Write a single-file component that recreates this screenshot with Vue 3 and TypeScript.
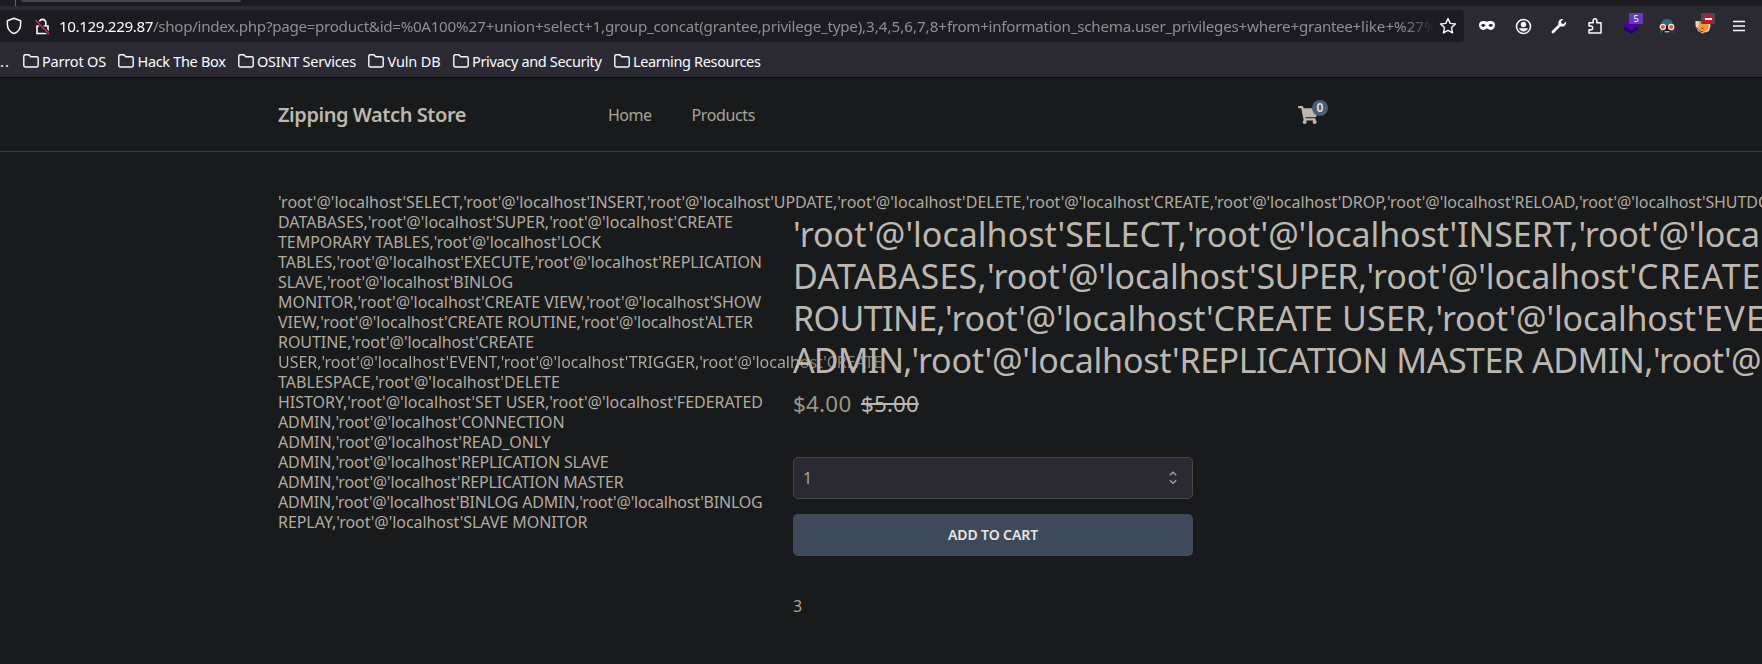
<script setup lang="ts">
import type { Directive } from 'vue'

interface Run {
  text: string
  width: number
}

// Tracks a run of text so that its advance equals the given width.
const vFit: Directive<HTMLElement, number> = {
  mounted(el, { value }) {
    const length = el.textContent?.length ?? 0
    if (!length) return
    el.style.letterSpacing = `${(value - el.getBoundingClientRect().width) / length}px`
  },
}

const run = (text: string, width: number): Run => ({ text, width })
const grant = (privilege: string): string => `'root'@'localhost'${privilege}`

const urlPath: Run[] = [
  run('/shop/index.php?page=product&id=%0A10', 294.5),
  run('0%27+union+select+1,', 157.5),
  run('group_concat(grantee,privilege_type)', 257),
  run(',3,4,5,6,7,8+', 85),
  run('from+', 41.5),
  run('information_schema.user_privileges+', 258.5),
  run('where+', 52),
  run('grantee+', 62),
  run('like+%27', 63),
  run('%', 13),
]

const bookmarks: Run[] = [
  run('Parrot OS', 64),
  run('Hack The Box', 88),
  run('OSINT Services', 99),
  run('Vuln DB', 53),
  run('Privacy and Security', 129.5),
  run('Learning Resources', 127.5),
]

const imageText: Run[][] = [
  [
    run(`${grant('SELECT')},`, 185.3),
    run(`${grant('INSERT')},`, 183.7),
    run(`${grant('UPDATE')},`, 190.2),
    run(`${grant('DELETE')},`, 188.6),
    run(`${grant('CREATE')},`, 188.2),
    run(`${grant('DROP')},`, 173),
    run(`${grant('RELOAD')},`, 192),
    run(grant('SHUTDOWN'), 218),
  ],
  [run(`DATABASES,${grant('SUPER')},${grant('CREATE')}`, 455)],
  [run(`TEMPORARY TABLES,${grant('LOCK')}`, 323)],
  [run(`TABLES,${grant('EXECUTE')},${grant('REPLICATION')}`, 484)],
  [run(`SLAVE,${grant('BINLOG')}`, 235)],
  [run(`MONITOR,${grant('CREATE VIEW')},${grant('SHOW')}`, 483)],
  [run(`VIEW,${grant('CREATE ROUTINE')},${grant('ALTER')}`, 475)],
  [run(`ROUTINE,${grant('CREATE')}`, 256)],
  [run(`USER,${grant('EVENT')},${grant('TRIGGER')},${grant('CREATE')}`, 604.5)],
  [run(`TABLESPACE,${grant('DELETE')}`, 282)],
  [run(`HISTORY,${grant('SET USER')},${grant('FEDERATED')}`, 485)],
  [run(`ADMIN,${grant('CONNECTION')}`, 286.5)],
  [run(`ADMIN,${grant('READ_ONLY')}`, 272.5)],
  [run(`ADMIN,${grant('REPLICATION SLAVE')}`, 330.5)],
  [run(`ADMIN,${grant('REPLICATION MASTER')}`, 345.5)],
  [run(`ADMIN,${grant('BINLOG ADMIN')},${grant('BINLOG')}`, 484.5)],
  [run(`REPLAY,${grant('SLAVE MONITOR')}`, 309.5)],
]

const titleText: Run[][] = [
  [run(`${grant('SELECT')},`, 394), run(`${grant('INSERT')},`, 391.5), run(grant('UPDATE'), 392)],
  [run('DATABASES,', 194), run(grant(''), 269.5), run('SUPER,', 110), run(grant(''), 270.5), run('CREATE', 124.5)],
  [run('ROUTINE,', 152), run(grant(''), 268.5), run('CREATE USER,', 222), run(grant(''), 268.5), run('EVENT,', 118)],
  [run('ADMIN,', 118.5), run(grant(''), 268), run('REPLICATION MASTER ADMIN,', 473.5), run(grant('BINLOG'), 385)],
]
</script>

<template>
  <div class="window">
    <div class="tabs"><i class="divider"></i><i class="tab"></i></div>
    <div class="toolbar">
      <div class="urlbar">
        <svg class="shield" width="16" height="18" viewBox="0 0 16 18"><path d="M8 1.2 14.6 3.7V7.500C14.6 12 12 14.9 8 16.6 4 14.9 1.4 12 1.4 7.500V3.7Z" fill="none" stroke="#fbfbfe" stroke-width="1.5" stroke-linejoin="round" /></svg>
        <svg class="lock" width="15" height="17" viewBox="0 0 15 17">
          <path d="M2 8h11v7.500H2zM4.200 8V4.700a3.300 3.300 0 0 1 6.600 0V8" fill="none" stroke="#fbfbfe" stroke-width="1.6" />
          <path d="M.8 2.200 14 15.800" stroke="#1c1b22" stroke-width="3.500" />
          <path d="M.5 2.200 14 15.800" stroke="#e22850" stroke-width="1.400" />
        </svg>
        <div class="url"><span v-fit="94" class="host">10.129.229.87</span><span v-for="part in urlPath" :key="part.text" v-fit="part.width">{{ part.text }}</span></div>
        <svg class="star" width="18" height="18" viewBox="0 0 18 18"><path d="m9 1.500 2.200 4.900 5.300.6-4 3.600 1.100 5.300L9 13.300l-4.600 2.600 1.100-5.300-4-3.600 5.300-.6Z" fill="none" stroke="#fbfbfe" stroke-width="1.400" stroke-linejoin="round" /></svg>
      </div>
      <div class="actions">
        <svg viewBox="0 0 20 20"><path fill="#fbfbfe" fill-rule="evenodd" d="M2 8.600C2 6 4.300 5 6.500 5 8 5 9 5.700 10 5.700S12 5 13.500 5C15.700 5 18 6 18 8.600c0 3.200-1.800 5.400-4.200 5.400-1.800 0-2.600-1.600-3.800-1.600S8 14 6.200 14C3.800 14 2 11.800 2 8.600ZM4 9.400c1.300 1.800 3.400 1.600 4.500.1C7.300 7.600 5 7.700 4 9.400Zm12 0c-1.300 1.800-3.400 1.600-4.500.1 1.200-1.900 3.500-1.800 4.500-.1Z" /></svg>
        <svg viewBox="0 0 20 20"><circle cx="10.500" cy="10.500" r="7" fill="none" stroke="#fbfbfe" stroke-width="1.500" /><circle cx="10.500" cy="8.500" r="2.700" fill="#fbfbfe" /><path d="M6.100 12.200h8.800c-.5 2-2.400 3.200-4.400 3.200s-3.900-1.200-4.400-3.200Z" fill="#fbfbfe" /></svg>
        <svg viewBox="0 0 20 20"><path d="m3.900 16 7.300-7.300" stroke="#fbfbfe" stroke-width="2.700" stroke-linecap="round" /><path d="M14.500 3 12 5.600l.5 2 2 .5L17 5.600c.6 3-1.300 5.200-4.200 5L9.500 9.900 9.300 7C9.300 4.200 11.700 2.500 14.500 3Z" fill="#fbfbfe" /></svg>
        <svg viewBox="0 0 20 20"><path d="M4 17V13.800h1.800a1.900 1.900 0 0 0 0-3.800H4V6.700h4.200V4.500a1.800 1.800 0 0 1 3.600 0v2.200H16V17Z" fill="none" stroke="#fbfbfe" stroke-width="1.500" stroke-linejoin="round" /></svg>
        <div class="extension">
          <svg viewBox="0 0 20 20"><path d="m2 12.500 8-5 8 5-8 5.500Z" fill="#20006b" /><path d="m2 9 8-5.500L18 9l-8 5.500Z" fill="#4b00a8" /></svg>
          <b class="count">5</b>
        </div>
        <svg viewBox="0 0 20 20">
          <path d="M4 9.500C4 5 6.500 3 10 3s6 2 6 6.500Z" fill="#2d6a7a" /><path d="M3 14h14v3H3z" fill="#194958" /><path d="M6 11h8v6H6z" fill="#17191e" /><path d="M7.500 15.800h5" stroke="#c9d4d8" stroke-width="1.200" />
          <circle cx="5.800" cy="11" r="2.600" fill="#e1543e" stroke="#f4e3dc" stroke-width="1.200" /><circle cx="14.200" cy="11" r="2.600" fill="#e1543e" stroke="#f4e3dc" stroke-width="1.200" />
        </svg>
        <div class="extension">
          <svg viewBox="0 0 20 20"><path d="m2.500 5 6 .5 8-.5 1 5-1.500 5-6 2.500-5-2.500-2.500-5Z" fill="#ded9d0" /><path d="M6 6h8l2 4-2 5-6 1-3-4Z" fill="#f79a35" /><path d="m3.500 11 3 4 6 1.500" fill="none" stroke="#5f5750" /><path d="m8 12 3 1" stroke="#9c5120" /></svg>
          <i class="blocked"><i></i></i>
        </div>
        <svg viewBox="0 0 20 20"><path d="M4 5.500h12M4 10h12M4 14.500h12" stroke="#fbfbfe" stroke-width="1.300" /></svg>
      </div>
    </div>
    <div class="bookmarks">
      <span class="more">..</span>
      <span v-for="item in bookmarks" :key="item.text" class="bookmark">
        <svg width="16" height="14" viewBox="0 0 16 14"><path d="M2.200.8h3.600l2 2h6c.8 0 1.400.6 1.400 1.400v7.400c0 .8-.6 1.400-1.400 1.400H2.200C1.400 13 .8 12.400.8 11.600V2.200C.8 1.400 1.400.8 2.200.8Z" fill="none" stroke="#fbfbfe" stroke-width="1.400" /></svg>
        <span v-fit="item.width" class="label">{{ item.text }}</span>
      </span>
    </div>

    <header>
      <h1><span v-fit="188">Zipping Watch Store</span></h1>
      <nav><a v-fit="43.500">Home</a><a v-fit="63.500">Products</a></nav>
      <div class="cart">
        <svg width="20" height="18" viewBox="0 0 576 512"><path fill="#bdb7af" d="M528.120 301.319l47.273-208C578.806 78.301 567.391 64 551.990 64H159.208l-9.166-44.810C147.758 8.021 137.930 0 126.529 0H24C10.745 0 0 10.745 0 24v16c0 13.255 10.745 24 24 24h69.883l70.248 343.435C147.325 417.100 136 435.222 136 456c0 30.928 25.072 56 56 56s56-25.072 56-56c0-15.674-6.447-29.835-16.824-40h209.647C430.447 426.165 424 440.326 424 456c0 30.928 25.072 56 56 56s56-25.072 56-56c0-22.172-12.888-41.332-31.579-50.405l5.517-24.276c3.413-15.018-8.002-29.319-23.403-29.319H218.117l-6.545-32h293.145c11.206 0 20.920-7.754 23.403-18.681z" /></svg>
        <span>0</span>
      </div>
    </header>

    <main>
      <div class="image">
        <div v-for="(line, i) in imageText" :key="i" class="line"><span v-for="(part, j) in line" :key="j" v-fit="part.width" :class="{ faded: i === 8 }">{{ part.text }}</span></div>
      </div>
      <section>
        <h2>
          <div v-for="(line, i) in titleText" :key="i" class="line"><span v-for="(part, j) in line" :key="j" v-fit="part.width">{{ part.text }}</span></div>
        </h2>
        <div class="price"><span v-fit="58.500">$4.00</span><s v-fit="58">$5.00</s></div>
        <div class="quantity"><span>1</span><svg width="8" height="14" viewBox="0 0 8 14"><path d="m.8 4.200 3.200-3 3.200 3M.8 9.200l3.200 3 3.200-3" fill="none" stroke="#a09daa" stroke-width="1.400" /></svg></div>
        <button><span v-fit="90">ADD TO CART</span></button>
        <p>3</p>
      </section>
    </main>
  </div>
</template>

<style>
body { margin: 0; background: #181a1b; overflow: hidden; }
</style>

<style scoped>
* { box-sizing: border-box; }
.window { width: 1762px; height: 664px; overflow: hidden; background: #181a1b; color: #b2aba1; font-family: "Noto Sans", sans-serif; white-space: nowrap; }
.tabs { height: 6px; background: #1c1b22; display: flex; }
.divider { width: 1px; height: 6px; margin-left: 15px; background: #65646d; }
.tab { width: 220px; height: 2px; margin-left: 5px; background: #42414d; border-radius: 0 0 4px 4px; }
.toolbar { height: 36px; padding-top: 4px; background: #2b2a33; display: flex; }
.urlbar { width: 1464px; height: 32px; background: #1c1b22; border-radius: 0 4px 4px 0; display: flex; align-items: center; flex: none; }
.shield { margin-left: 6px; }
.lock { margin-left: 13px; }
.url { width: 1374px; margin-left: 9px; overflow: hidden; display: flex; font-size: 15.200px; line-height: 32px; color: #8f8e94; mask-image: linear-gradient(to right, #000 1345px, transparent 1376px); }
.url span { flex: none; }
.host { color: #fbfbfe; }
.star { margin-left: 6px; }
.actions { flex: 1; display: flex; padding: 6px 0 0 13px; gap: 16px; }
.actions svg { width: 20px; height: 20px; display: block; flex: none; }
.extension { width: 20px; height: 20px; position: relative; }
.count { position: absolute; left: 8px; top: -3px; width: 14px; height: 11px; background: #6839bb; border-radius: 1px; color: #fff; font-size: 9px; line-height: 11px; font-weight: 400; text-align: center; }
.blocked { position: absolute; left: 8px; top: -3px; width: 14px; height: 11px; background: #4b4b4e; border-radius: 1px; display: grid; place-items: center; }
.blocked i { width: 10px; height: 10px; border-radius: 5px; background: linear-gradient(#fff, #fff) center / 7px 2px no-repeat #c5162e; }
.bookmarks { height: 36px; background: #2b2a33; border-bottom: 1px solid #0c0c0d; display: flex; align-items: flex-end; color: #fbfbfe; font-size: 14.500px; line-height: 32px; }
.more { width: 22.500px; letter-spacing: 1px; }
.bookmark { display: flex; align-items: center; gap: 3.500px; margin-right: 12px; }
.bookmark svg { flex: none; margin-top: -1px; }
header { height: 74px; border-bottom: 1px solid #3a3e41; display: flex; align-items: center; padding: 0 434px 0 278px; }
h1 { width: 330px; margin: 0; font-size: 20px; line-height: 74px; font-weight: 600; color: #bdb7af; }
nav { display: flex; gap: 40px; font-size: 16px; color: #aaa397; }
h1, nav { padding-top: 1px; }
.cart { position: relative; height: 18px; margin-left: auto; width: 30px; }
.cart svg { display: block; }
.cart span { position: absolute; left: 14px; top: -6px; width: 16px; height: 16px; border-radius: 8px; background: #4a5c74; color: #e8e6e3; font-size: 12px; line-height: 16px; font-weight: 600; text-align: center; }
main { display: flex; padding: 40px 0 0 278px; }
.image { width: 515px; flex: none; font-size: 16px; line-height: 20px; }
.faded { background: linear-gradient(to right, #b2aba1 518px, #8b857b 526px); background-clip: text; color: transparent; }
section { width: 400px; padding-top: 21px; flex: none; }
h2 { margin: 0; font-size: 34px; line-height: 42px; font-weight: 400; color: #bdb7af; }
.line { display: flex; }
.line span { flex: none; }
.price { margin-top: 8px; height: 41px; display: flex; gap: 9.500px; font-size: 22.400px; line-height: 30px; color: #9d9488; }
s { color: #bdb7af; }
.quantity { margin-top: 27px; height: 42px; border: 1px solid #44474d; border-radius: 5px; background: #2b2a33; display: flex; align-items: center; justify-content: space-between; padding: 0 15px 0 9px; font-size: 16px; color: #aaa397; }
button { display: block; margin-top: 15px; width: 400px; height: 42px; padding: 0; border: 0; border-radius: 5px; background: #3e4a5a; color: #e8e6e3; font: 600 14px/42px "Noto Sans", sans-serif; }
p { margin: 38px 0 0; font-size: 16px; line-height: 24px; color: #aaa397; }
</style>
